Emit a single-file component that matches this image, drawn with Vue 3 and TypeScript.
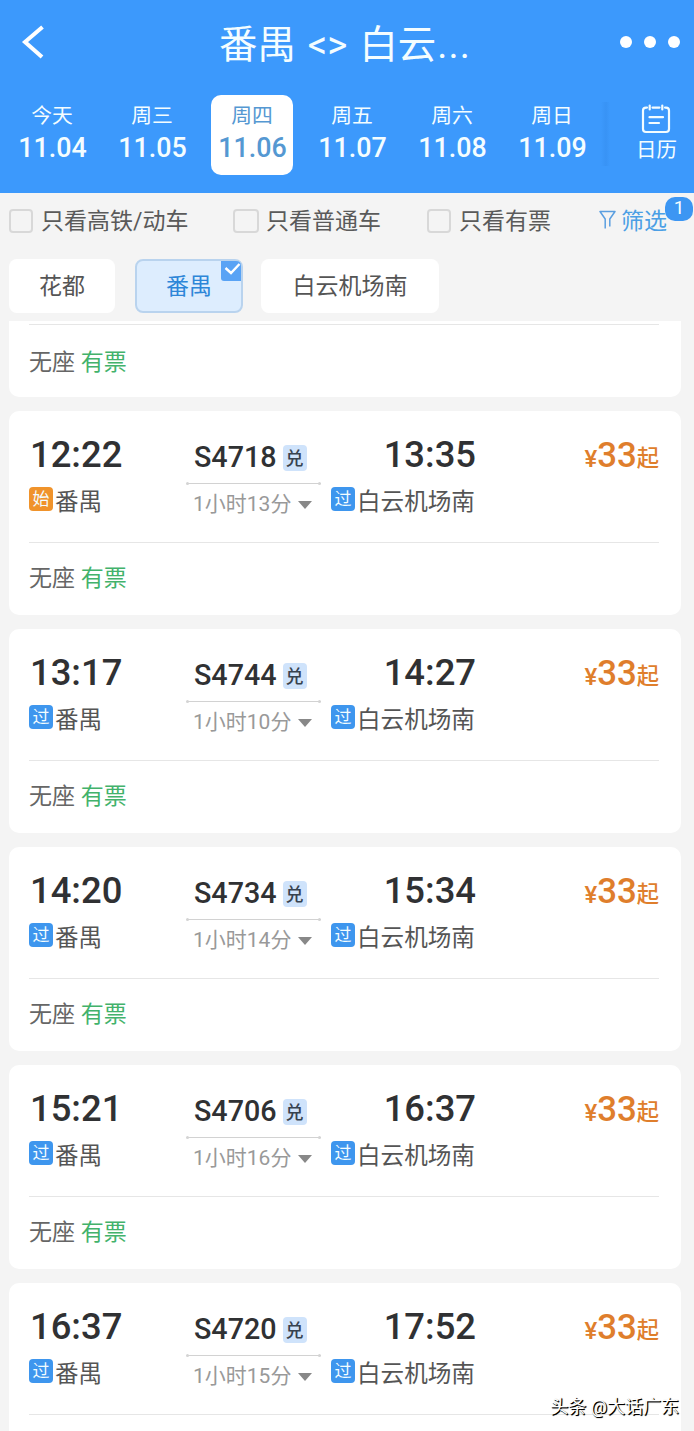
<script setup lang="ts">
interface Day { label: string; date: string; active?: boolean }
interface Train { dep: string; arr: string; no: string; dur: string; start?: boolean; seats: boolean }

const days: Day[] = [
  { label: '今天', date: '11.04' },
  { label: '周三', date: '11.05' },
  { label: '周四', date: '11.06', active: true },
  { label: '周五', date: '11.07' },
  { label: '周六', date: '11.08' },
  { label: '周日', date: '11.09' },
]

const trains: Train[] = [
  { dep: '12:22', arr: '13:35', no: 'S4718', dur: '1小时13分', start: true, seats: true },
  { dep: '13:17', arr: '14:27', no: 'S4744', dur: '1小时10分', seats: true },
  { dep: '14:20', arr: '15:34', no: 'S4734', dur: '1小时14分', seats: true },
  { dep: '15:21', arr: '16:37', no: 'S4706', dur: '1小时16分', seats: true },
  { dep: '16:37', arr: '17:52', no: 'S4720', dur: '1小时15分', seats: false },
]
</script>

<template>
  <div class="page">
    <header class="header">
      <div class="titlebar">
        <svg class="back" width="24" height="34" viewBox="0 0 24 34">
          <path d="M22.5 2 L5 17 L22 32" fill="none" stroke="#fff" stroke-width="4" />
        </svg>
        <h1 class="title">番禺 &lt;&gt; 白云<span class="dots">...</span></h1>
        <div class="more"><i /><i /><i /></div>
      </div>
      <nav class="days">
        <div v-for="d in days" :key="d.date" class="day" :class="{ active: d.active }">
          <span class="label">{{ d.label }}</span>
          <span class="date">{{ d.date }}</span>
        </div>
        <div class="calendar">
          <svg width="30" height="30" viewBox="0 0 30 30" fill="none" stroke="#f2fcff" stroke-width="2.2" stroke-linecap="round">
            <path d="M6 3.6 H5 Q2 3.6 2 6.6 V25 Q2 28 5 28 H25 Q28 28 28 25 V6.6 Q28 3.6 25 3.6 H24 M11.5 3.6 H18.5" />
            <path d="M8.7 1.6 V5.4 M21.3 1.6 V5.4 M8.5 13.2 H22 M8.5 19 H18" />
          </svg>
          <span>日历</span>
        </div>
      </nav>
    </header>

    <div class="filters">
      <label class="check c1"><i class="box" />只看高铁/动车</label>
      <label class="check c2"><i class="box wide" />只看普通车</label>
      <label class="check c3"><i class="box" />只看有票</label>
      <div class="filter">
        <svg width="17" height="20" viewBox="0 0 17 20" fill="none" stroke="#5b9fe0" stroke-width="1.5" stroke-linejoin="round">
          <path d="M6.2 18.5 V9 L1 1.5 H16 L10.8 9 V16.5" />
        </svg>
        <span>筛选</span>
        <b class="count">1</b>
      </div>
    </div>

    <div class="stations">
      <div class="chip s1">花都</div>
      <div class="chip s2 selected">
        番禺
        <svg class="tick" width="20" height="20" viewBox="0 0 20 20">
          <path d="M0 0 H15 Q20 0 20 5 V20 H3 Q0 20 0 17 Z" fill="#59a3f5" />
          <path d="M4.5 7 L10 12 L18.5 3" fill="none" stroke="#fff" stroke-width="2.4" />
        </svg>
      </div>
      <div class="chip s3">白云机场南</div>
    </div>

    <main class="list">
      <section class="card partial">
        <div class="seats">无座 <em>有票</em></div>
      </section>
      <section v-for="t in trains" :key="t.no" class="card">
        <div class="journey">
          <div class="end">
            <div class="time">{{ t.dep }}</div>
            <div class="station"><span class="tag" :class="{ start: t.start }">{{ t.start ? '始' : '过' }}</span>番禺</div>
          </div>
          <div class="mid">
            <div class="number">{{ t.no }}<span class="redeem">兑</span></div>
            <div class="line" />
            <div class="duration">{{ t.dur }}<i class="caret" /></div>
          </div>
          <div class="end arrive">
            <div class="time">{{ t.arr }}</div>
            <div class="station"><span class="tag">过</span>白云机场南</div>
          </div>
          <div class="price"><small>¥</small><strong>33</strong><span>起</span></div>
        </div>
        <div class="seats"><template v-if="t.seats">无座 <em>有票</em></template></div>
      </section>
    </main>
    <div class="watermark">头条 @大话广东</div>
  </div>
</template>

<style>
html, body { margin: 0; background: #f4f4f4; }
</style>

<style scoped>
.page, .page * { box-sizing: border-box; }
.page {
  position: relative;
  width: 694px;
  height: 1431px;
  overflow: hidden;
  background: #f4f4f4;
  font-family: Roboto, "Noto Sans CJK SC", sans-serif;
  color: #555;
  white-space: nowrap;
}
i, em { font-style: normal; }
.header { height: 193px; background: #3c99fc; color: #f4fdff; }
.titlebar { display: flex; align-items: center; height: 95px; padding: 0 14px 12px 20px; }
.back { width: 24px; flex: none; }
.title { flex: 1; margin: 0 0 0 175px; padding-top: 6px; font-size: 38.4px; line-height: 50px; font-weight: 400; word-spacing: 2.5px; }
.dots { margin-left: 1px; letter-spacing: 1.2px; }
.more { display: flex; gap: 12px; }
.more i { width: 12px; height: 12px; border-radius: 50%; background: #fff; }
.days { display: flex; padding-left: 11px; }
.day {
  display: flex; flex-direction: column; align-items: center; flex: none;
  width: 82px; height: 80px; margin-right: 18px; padding-top: 7px; border-radius: 10px;
}
.day.active { background: #fff; color: #5598d2; }
.label { font-size: 20.8px; line-height: 28px; }
.date { font-size: 26.8px; line-height: 34px; font-weight: 500; margin-top: 1px; padding-left: 1px; }
.calendar {
  display: flex; flex-direction: column; align-items: center; flex: 1;
  height: 64px; margin-top: 7px; margin-left: -10px; padding: 2px 0 0 16px;
  background: linear-gradient(90deg, #3c99fc 0, #3893f5 5px, #3c99fc 9px);
}
.calendar svg { flex: none; }
.calendar span { font-size: 20.5px; line-height: 30px; margin-top: 1px; padding-left: 2px; }

.filters { display: flex; height: 56px; font-size: 23px; line-height: 56px; color: #5a5a5a; padding: 2px 0 0 9px; }
.check { display: flex; align-items: center; }
.box { width: 24px; height: 24px; border: 2px solid #d8d8d8; border-radius: 4px; margin: -3px 8px 0 0; }
.box.wide { width: 26px; margin-right: 7px; }
.c1 { width: 224px; }
.c2 { width: 194px; }
.c3 { width: 172px; }
.filter { position: relative; display: flex; align-items: center; gap: 5px; color: #4b9fe5; }
.filter svg { margin-top: -5px; }
.count {
  position: absolute; left: 66px; top: 2px; width: 28px; height: 24px; border-radius: 10px;
  background: #3c96f3; color: #f4fdff; text-align: center; font-size: 19px; line-height: 21px; font-weight: 400;
}
.stations { display: flex; gap: 20px; height: 72px; padding: 10px 9px 8px; font-size: 23px; }
.chip { position: relative; height: 54px; line-height: 56px; text-align: center; background: #fff; border-radius: 8px; }
.s1 { width: 106px; }
.s2 { width: 108px; }
.s3 { width: 178px; margin-left: -2px; }
.selected { background: #ddedfe; border: 2px solid #b9d3ee; line-height: 52px; color: #2d86d8; }
.tick { position: absolute; right: 0; top: 0; }

.list { display: flex; flex-direction: column; gap: 14px; padding: 0 13px 0 9px; }
.card { flex: none; height: 204px; background: #fff; border-radius: 10px; padding: 0 22px 0 20px; }
.partial { height: 76px; padding-top: 3px; border-radius: 0 0 10px 10px; }
.partial .seats { padding-top: 18px; }
.journey { display: flex; height: 131px; padding-top: 23px; }
.end { width: 158px; }
.arrive { width: 145px; margin-left: 10px; }
.arrive .time { text-align: right; }
.time { font-size: 36.4px; line-height: 42px; font-weight: 500; color: #303133; padding-left: 1px; }
.station { display: flex; align-items: center; height: 30px; margin-top: 11px; font-size: 23.6px; line-height: 30px; }
.tag {
  flex: none; width: 24px; height: 24px; margin: -7px 2px 0 0; border-radius: 4px; background: #3e96ee;
  color: #f4fdff; font-size: 17px; line-height: 25px; text-align: center;
}
.tag.start { background: #f0932b; }
.mid { width: 134px; }
.number { display: flex; align-items: center; padding: 0 0 3px 7px; font-size: 28.7px; line-height: 46px; height: 49px; font-weight: 500; color: #303133; }
.redeem {
  width: 24px; height: 26px; margin: 1px 0 0 6px; border-radius: 4px; background: #cfe3fb;
  font-size: 18px; line-height: 27px; text-align: center; font-weight: 500; color: #37424f;
}
.line { height: 1px; background: #d2d2d2; position: relative; }
.line::before, .line::after { content: ""; position: absolute; top: -1px; width: 3px; height: 3px; border-radius: 50%; background: #d4d4d4; }
.line::before { left: -1px; }
.line::after { right: 0; }
.duration { display: flex; align-items: center; padding-left: 6px; font-size: 21px; line-height: 41px; color: #999; }
.caret { margin-left: 7px; border: 7.5px solid transparent; border-top: 8px solid #888; border-bottom: 0; }
.price { margin-left: auto; display: flex; align-items: baseline; height: 42px; line-height: 42px; color: #df7e2c; }
.price small { font-size: 24px; font-weight: 500; }
.price strong { font-size: 34.8px; font-weight: 500; }
.price span { font-size: 22.3px; font-weight: 500; position: relative; top: -1px; }
.seats { border-top: 1px solid #e6e6e6; padding-top: 16px; font-size: 23px; line-height: 40px; color: #666; }
.seats em { color: #42b26b; }
.watermark {
  position: absolute; right: 15px; top: 1394px; font-size: 18px; line-height: 26px;
  color: #fff; text-shadow: 1px 1px 0 #000, 1px 1px 1px #000;
}
</style>
